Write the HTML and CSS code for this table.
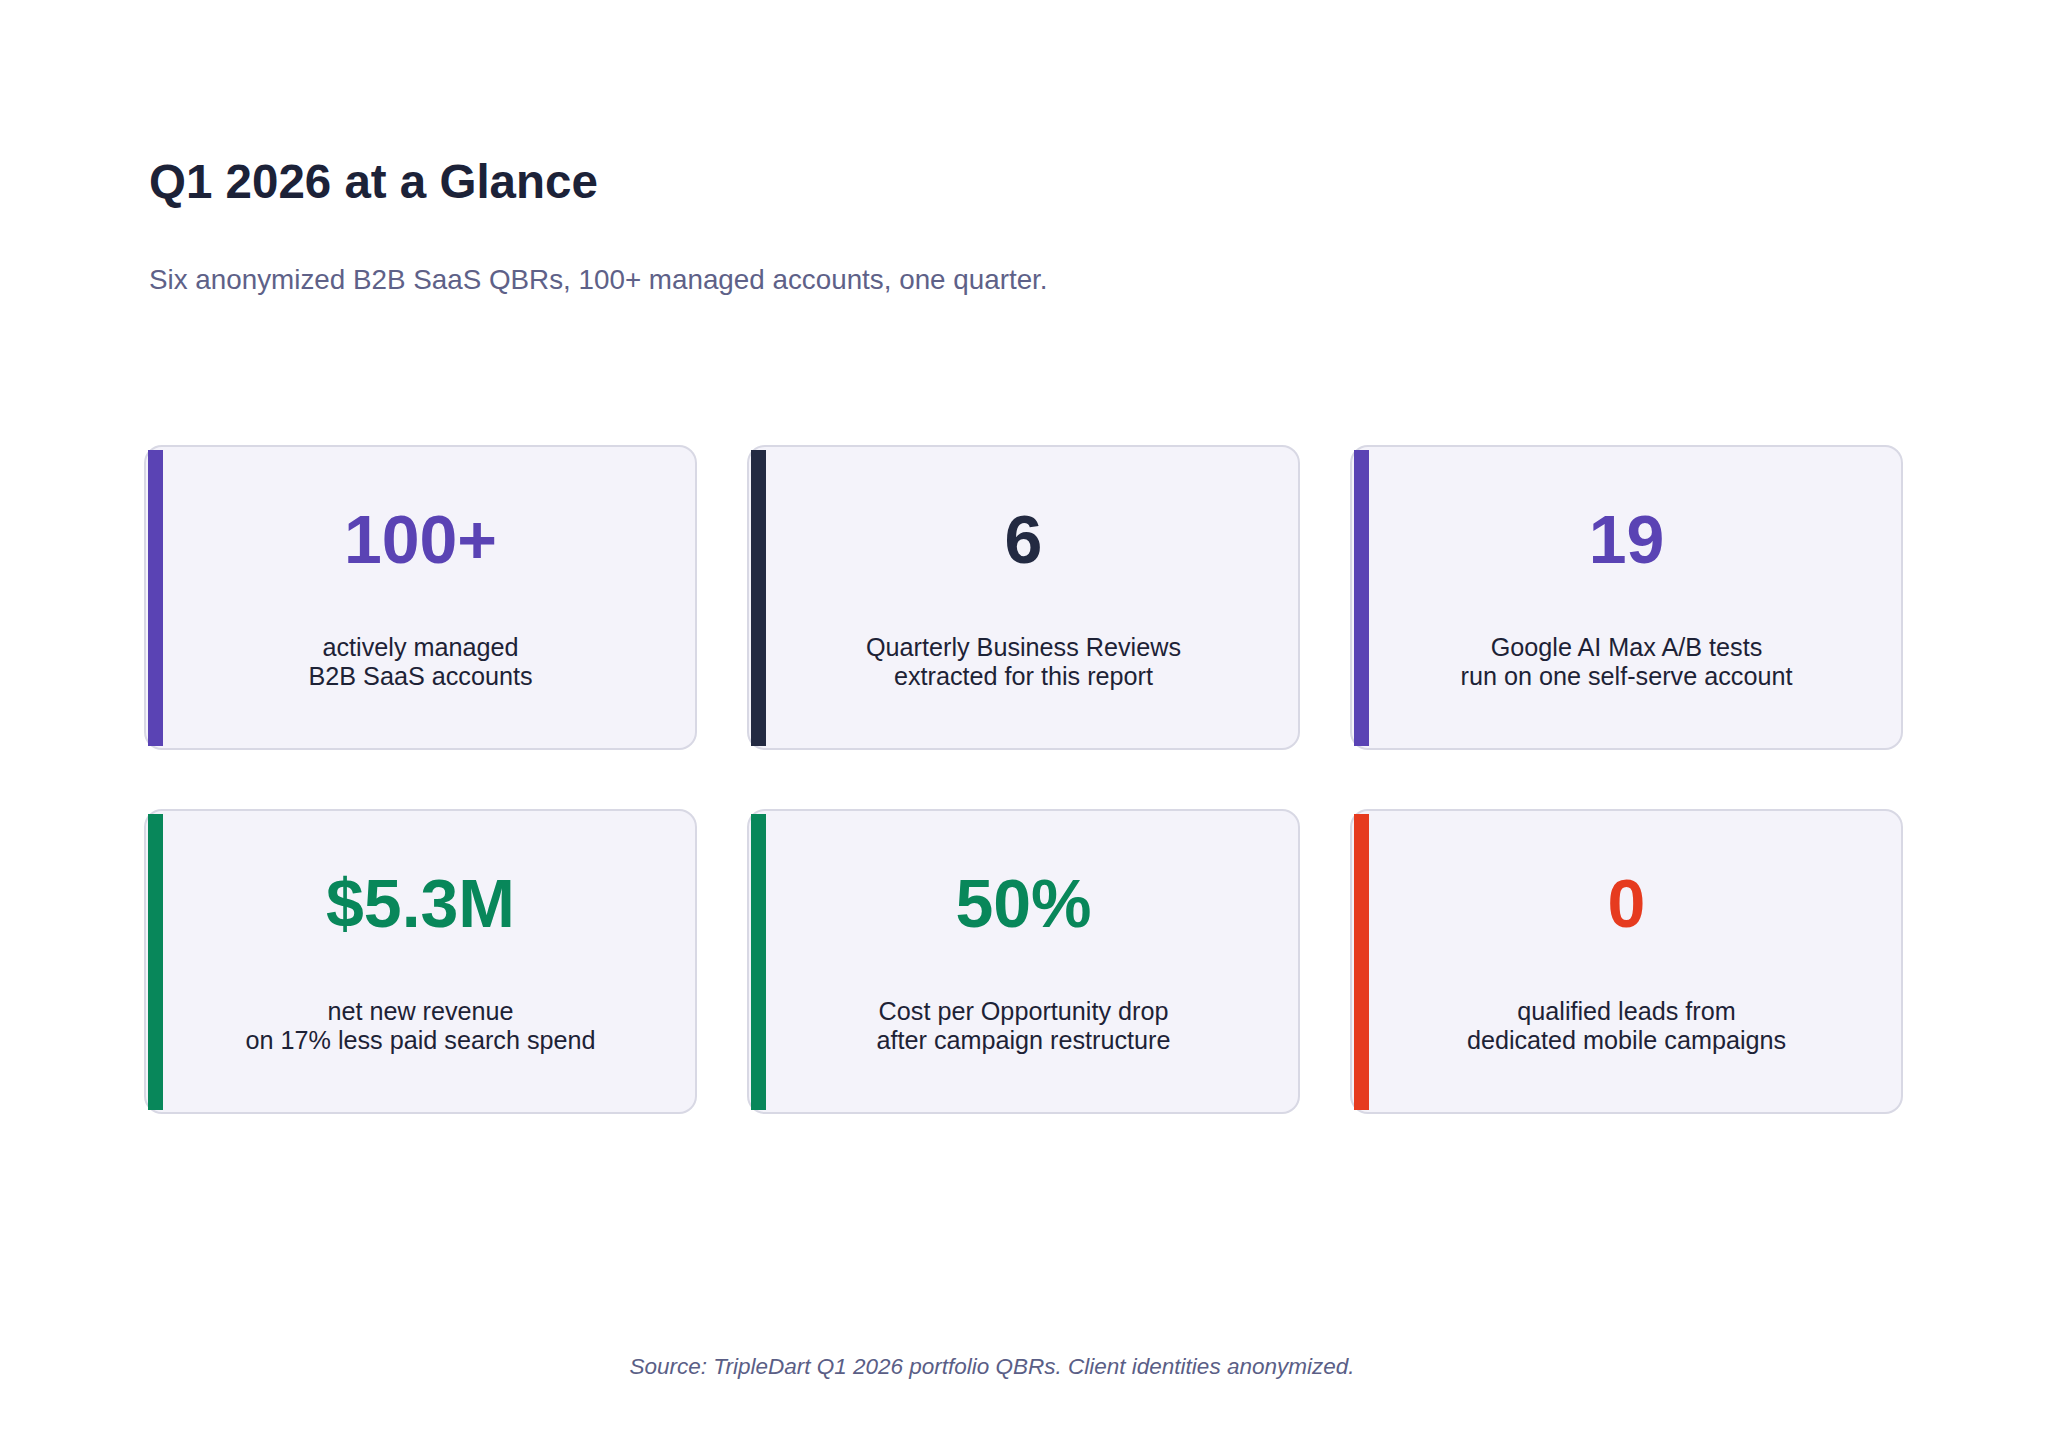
FILE: index.html
```html
<!DOCTYPE html>
<html lang="en">
<head>
<meta charset="utf-8">
<title>Q1 2026 at a Glance</title>
<link rel="stylesheet" href="styles.css">
</head>
<body>
<main class="page">
  <h1 class="title">Q1 2026 at a Glance</h1>
  <p class="subtitle">Six anonymized B2B SaaS QBRs, 100+ managed accounts, one quarter.</p>

  <section class="grid">
    <div class="card">
      <div class="bar purple-bg"></div>
      <div class="card-body">
        <div class="num purple">100+</div>
        <div class="label">actively managed<br>B2B SaaS accounts</div>
      </div>
    </div>
    <div class="card">
      <div class="bar navy-bg"></div>
      <div class="card-body">
        <div class="num navy">6</div>
        <div class="label">Quarterly Business Reviews<br>extracted for this report</div>
      </div>
    </div>
    <div class="card">
      <div class="bar purple-bg"></div>
      <div class="card-body">
        <div class="num purple">19</div>
        <div class="label">Google AI Max A/B tests<br>run on one self-serve account</div>
      </div>
    </div>
    <div class="card">
      <div class="bar green-bg"></div>
      <div class="card-body">
        <div class="num green">$5.3M</div>
        <div class="label">net new revenue<br>on 17% less paid search spend</div>
      </div>
    </div>
    <div class="card">
      <div class="bar green-bg"></div>
      <div class="card-body">
        <div class="num green">50%</div>
        <div class="label">Cost per Opportunity drop<br>after campaign restructure</div>
      </div>
    </div>
    <div class="card">
      <div class="bar red-bg"></div>
      <div class="card-body">
        <div class="num red">0</div>
        <div class="label">qualified leads from<br>dedicated mobile campaigns</div>
      </div>
    </div>
  </section>

  <footer class="source">Source: TripleDart Q1 2026 portfolio QBRs. Client identities anonymized.</footer>
</main>
</body>
</html>
```

FILE: styles.css
```css
html, body {
  margin: 0;
  padding: 0;
  background: #ffffff;
}

body {
  font-family: "Liberation Sans", Arial, sans-serif;
  color: #1d2236;
}

.page {
  width: 2048px;
  height: 1445px;
  box-sizing: border-box;
  padding: 153px 145px 0 144px;
}

.title {
  margin: 0 0 0 5px;
  font-size: 47.5px;
  line-height: 58px;
  font-weight: 700;
  color: #1c2238;
}

.subtitle {
  margin: 52px 0 0 5px;
  font-size: 27.8px;
  line-height: 34px;
  color: #5e6188;
}

.grid {
  margin-top: 148px;
  display: grid;
  grid-template-columns: repeat(3, 553px);
  grid-auto-rows: 305px;
  column-gap: 50px;
  row-gap: 59px;
}

.card {
  box-sizing: border-box;
  display: flex;
  padding: 3px 2px 2px 2px;
  background: #f4f3fa;
  border: 2px solid #d8d8e4;
  border-radius: 18px;
}

.bar {
  width: 15px;
  flex-shrink: 0;
}

.card-body {
  flex: 1;
  display: flex;
  flex-direction: column;
  align-items: center;
  justify-content: center;
  padding-right: 15px;
  text-align: center;
}

.num {
  font-size: 68px;
  line-height: 68px;
  font-weight: 700;
}

.label {
  margin-top: 60px;
  font-size: 25.2px;
  line-height: 29px;
  color: #1d2236;
}

.purple { color: #5a43b4; }
.navy { color: #232a42; }
.green { color: #08875a; }
.red { color: #e63b1f; }

.purple-bg { background: #5a43b4; }
.navy-bg { background: #232a42; }
.green-bg { background: #08875a; }
.red-bg { background: #e63b1f; }

.source {
  margin-top: 239px;
  padding-right: 63px;
  text-align: center;
  font-size: 22.5px;
  line-height: 27px;
  font-style: italic;
  color: #5a5e86;
}
```
